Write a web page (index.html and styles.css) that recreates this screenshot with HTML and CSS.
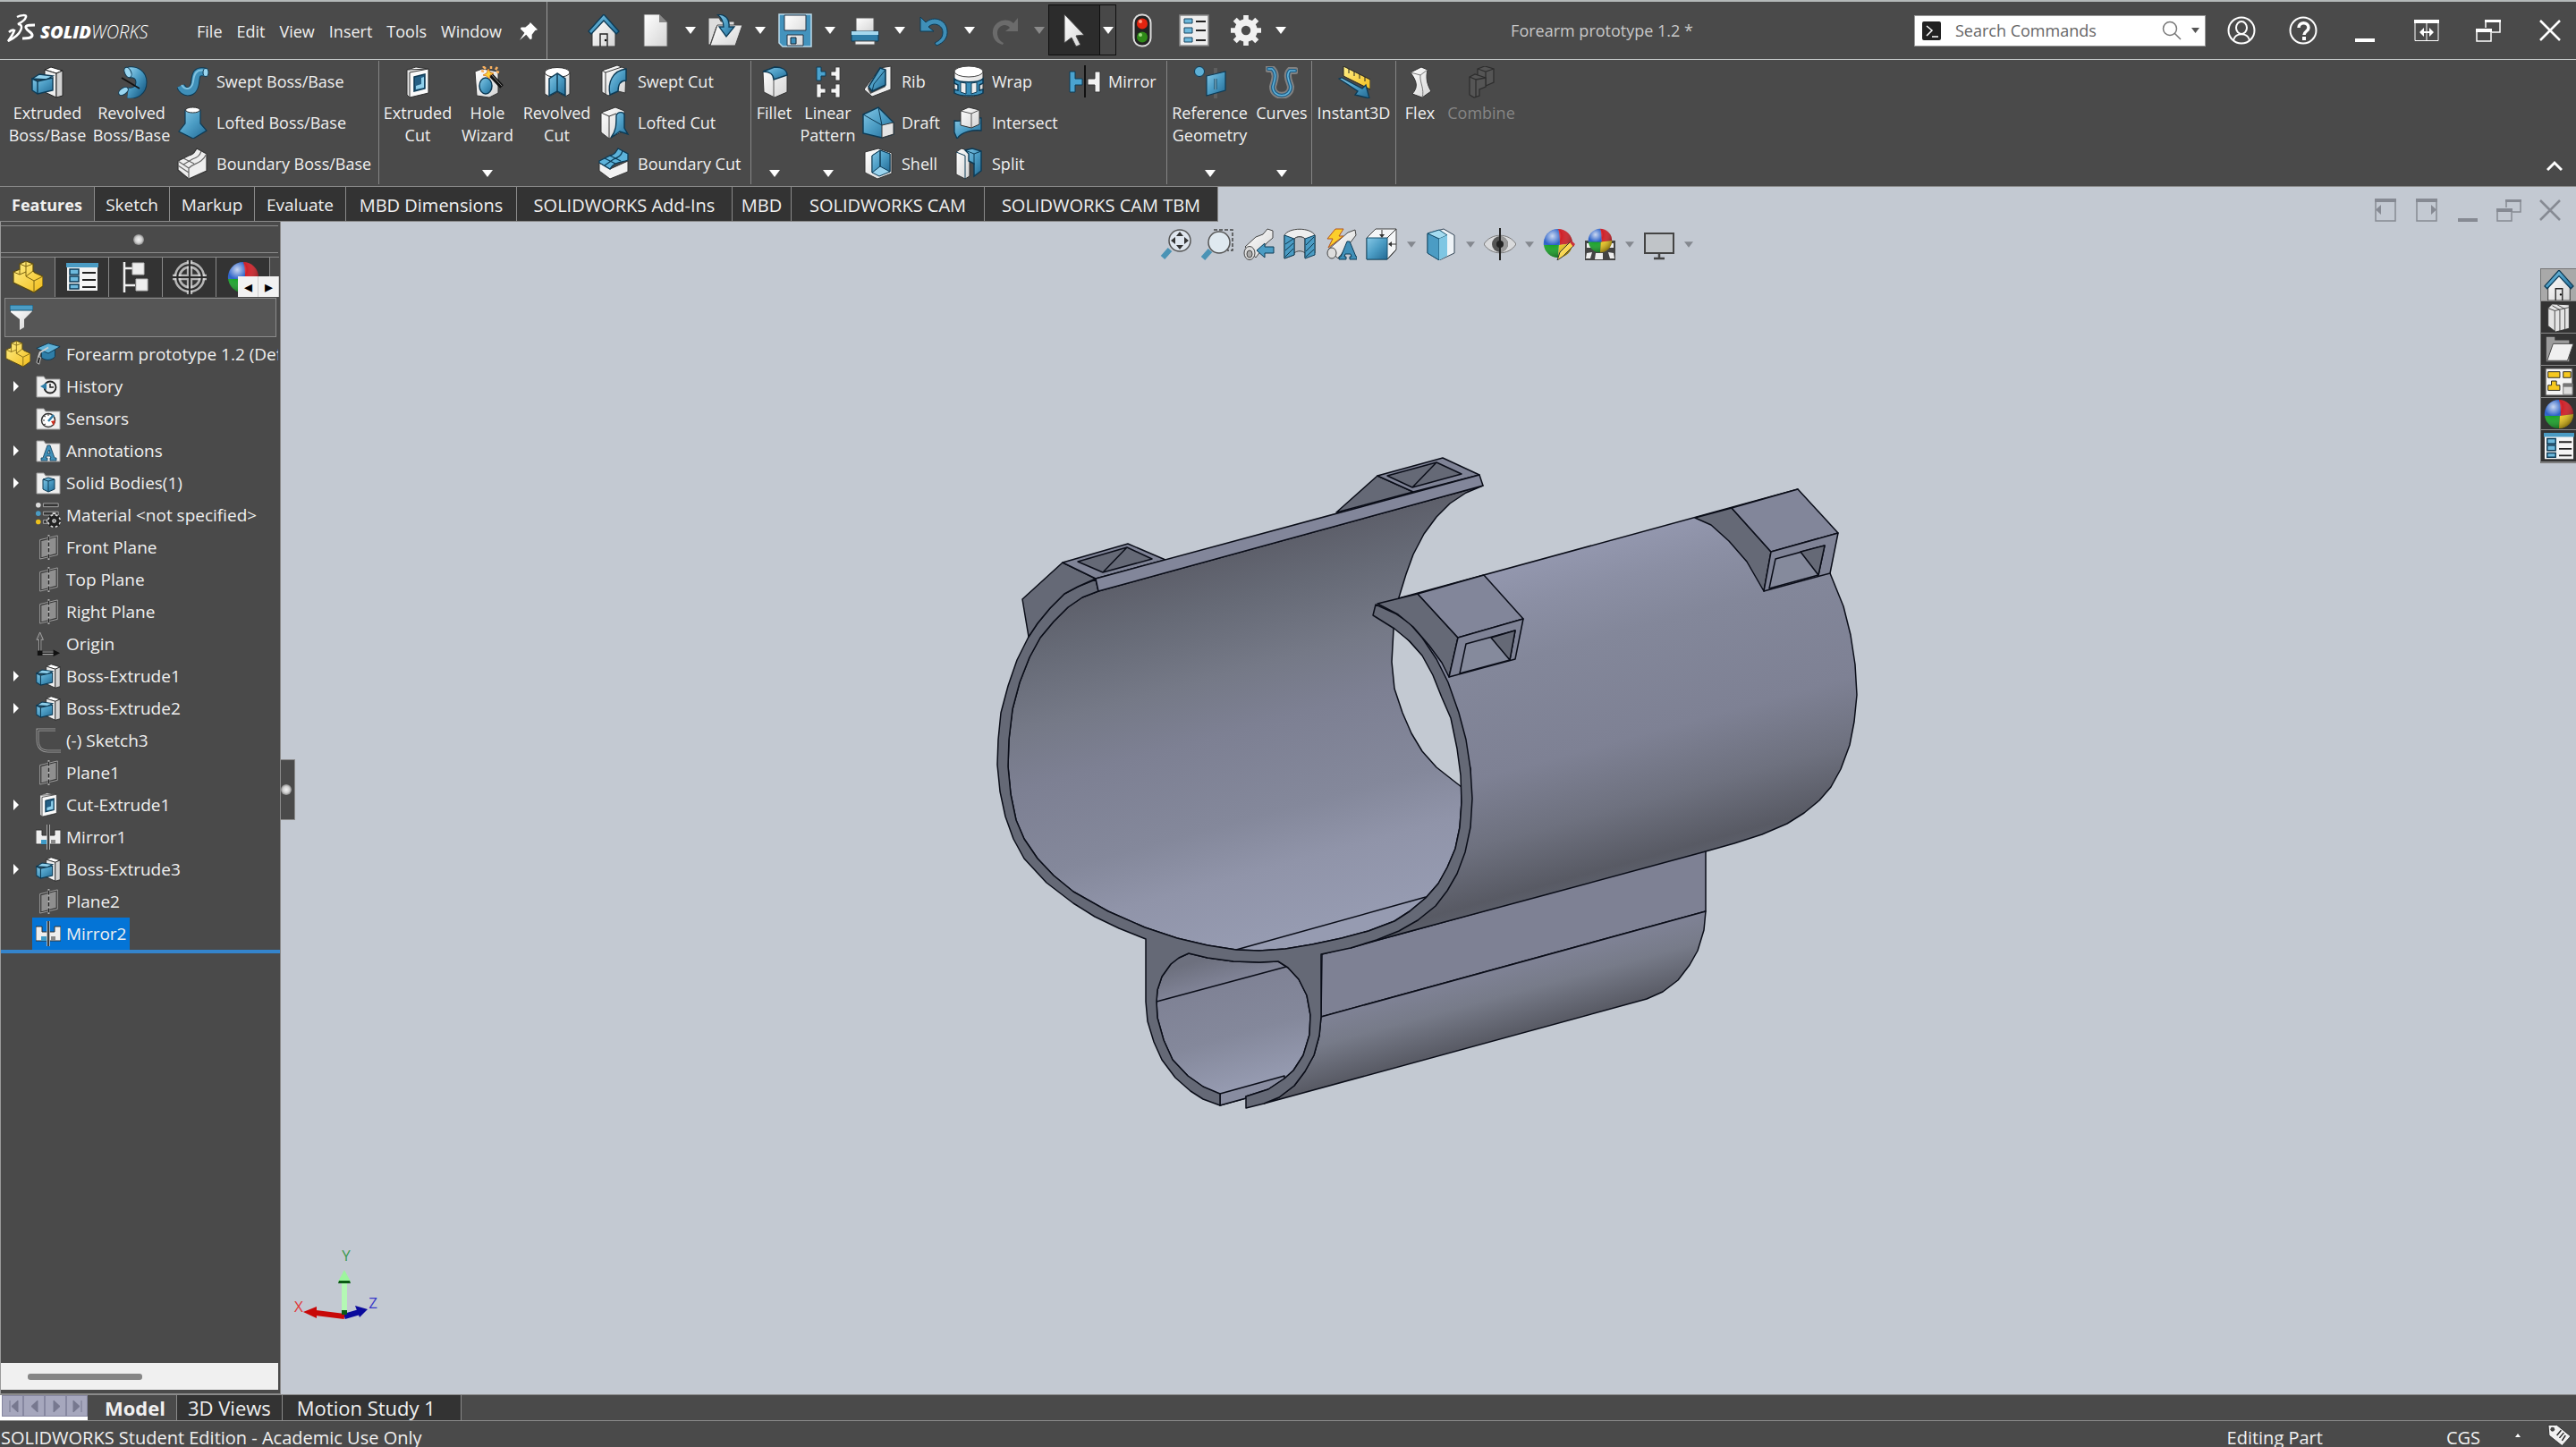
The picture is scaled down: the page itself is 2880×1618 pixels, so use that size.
FILE: index.html
```html
<!DOCTYPE html>
<html lang="en">
<head>
<meta charset="utf-8">
<title>Forearm prototype 1.2 - SOLIDWORKS</title>
<link rel="stylesheet" href="styles.css">
</head>
<body>
<svg class="defs" width="0" height="0" aria-hidden="true">
<defs>
<linearGradient id="b" x1="0" y1="0" x2="1" y2="1"><stop offset="0" stop-color="#86c8e6"/><stop offset=".5" stop-color="#4b9cc4"/><stop offset="1" stop-color="#236a94"/></linearGradient>
<linearGradient id="w" x1="0" y1="0" x2="1" y2="1"><stop offset="0" stop-color="#ffffff"/><stop offset="1" stop-color="#d4d4d4"/></linearGradient>
<linearGradient id="y" x1="0" y1="0" x2="1" y2="1"><stop offset="0" stop-color="#fff08a"/><stop offset="1" stop-color="#f2bd1c"/></linearGradient>
<radialGradient id="ball" cx=".3" cy=".25" r=".8"><stop offset="0" stop-color="#fff" stop-opacity=".75"/><stop offset=".4" stop-color="#fff" stop-opacity="0"/><stop offset="1" stop-color="#000" stop-opacity=".4"/></radialGradient>
<radialGradient id="dot"><stop offset="0" stop-color="#f4f4f4"/><stop offset=".6" stop-color="#d0d0d0"/><stop offset="1" stop-color="#8a8a8a"/></radialGradient>

<symbol id="i-down" viewBox="0 0 12 8"><path d="M0 0h12L6 8z"/></symbol>
<symbol id="i-extrude" viewBox="0 0 36 36"><g stroke="#222" stroke-width="1"><path fill="#fff" d="M15 4l7-3 13 4-7 3z"/><path fill="#eee" d="M15 4l13 4v27l-13-6z"/><path fill="#d2d2d2" d="M28 8l7-3v28l-7 2z"/></g><g stroke="#0c3a55" stroke-width="1.4"><path fill="#8fd0ec" d="M1 14l8-5 15 2-7 4z"/><path fill="url(#b)" d="M1 14l6 3 17-4v14L7 31l-6-4z"/><path d="M7 17v14" fill="none"/></g></symbol>
<symbol id="i-revolve" viewBox="0 0 36 36"><path d="M15 7c8-1 14 3 14 11 0 9-7 13-15 12" fill="none" stroke="#0c3a55" stroke-width="13"/><path d="M15 7c8-1 14 3 14 11 0 9-7 13-15 12" fill="none" stroke="url(#b)" stroke-width="11"/><ellipse cx="14" cy="7" rx="3.500" ry="6" transform="rotate(-25 14 7)" fill="#9ad6f0" stroke="#0c3a55"/><ellipse cx="9" cy="28" rx="6" ry="3.500" transform="rotate(-35 9 28)" fill="#9ad6f0" stroke="#0c3a55"/><path d="M7 13l20 12" stroke="#111" stroke-width="1.600"/></symbol>
<symbol id="i-sweep" viewBox="0 0 36 36"><path d="M4 23c3 8 14 10 16-3 1-9 1-15 13-12" fill="none" stroke="#0c3a55" stroke-width="10"/><path d="M4 23c3 8 14 10 16-3 1-9 1-15 13-12" fill="none" stroke="#3f8fb8" stroke-width="8"/><path d="M5 22c4 6 11 6 13-4 1-8 3-14 13-12" fill="none" stroke="#7fc2e0" stroke-width="2"/><ellipse cx="32" cy="8" rx="3" ry="4.500" fill="#9ad6f0" stroke="#0c3a55"/></symbol>
<symbol id="i-loft" viewBox="0 0 36 36"><path d="M9 4v15l-7 9 16 8 15-9-7-8V4z" fill="url(#b)" stroke="#0c3a55" stroke-width="1.200"/><ellipse cx="17.500" cy="4" rx="8" ry="3" fill="#fff" stroke="#333"/></symbol>
<symbol id="i-boundary" viewBox="0 0 36 36"><path d="M1 15l12-6c6-1 7-5 9-8l11 6v19L13 35 1 25z" fill="#eee" stroke="#333" stroke-width="1.200"/><path d="M1 15l12 8c5-6 14-4 20-16M13 23v12M7 12l12 6M1 20l12 8M7 19l10-6c5-2 8-3 10-9" fill="none" stroke="#666" stroke-width="1.200"/></symbol>
<symbol id="i-boundarycut" viewBox="0 0 36 36"><path d="M1 17l12 7 20-9v12L13 35 1 26z" fill="#f1f1f1" stroke="#333"/><path d="M1 15l12-6c6-1 7-5 9-8l11 6v7c-8 3-16 2-20 10L1 17z" fill="#5cb2da" stroke="#0c3a55" stroke-width="1.300"/><path d="M7 12l12 6M7 20l10-7c5-2 8-3 10-9M13 9l12 6" fill="none" stroke="#0c3a55" stroke-width="1.300"/></symbol>
<symbol id="i-cut" viewBox="0 0 36 36"><g stroke="#333"><path fill="#fff" d="M6 4l10-3 14 2-9 3z"/><path fill="#e9e9e9" d="M6 4l24-1v27L9 35l-3-3z"/><path fill="#fafafa" d="M9 7l21-4v27L9 35z"/></g><path d="M14 12l12-3v16l-12 3z" fill="#245f85" stroke="#0c3a55" stroke-width="1.500"/><path d="M16 22l6-2v-7l3-1v12l-9 2z" fill="#8fd0ec"/></symbol>
<symbol id="i-hole" viewBox="0 0 36 36"><path d="M4 6l8-3 18 3v24l-10 5L6 33z" fill="url(#w)" stroke="#333"/><ellipse cx="16" cy="22" rx="7" ry="9" fill="url(#b)" stroke="#0c3a55" stroke-width="1.500"/><path d="M20 8l14 15" stroke="#111" stroke-width="5"/><path d="M22 9l12 13" stroke="#888" stroke-width="1"/><path d="M19 3l2 4 4 1-4 2-1 4-3-3-4-1 4-2z" fill="#fcd23c" stroke="#e0862a"/><path d="M13 0l3 3M22-1v4M29 1l-2 3M11 5l3 1M31 7l-3-1" stroke="#f8b060" stroke-width="2.500"/></symbol>
<symbol id="i-revcut" viewBox="0 0 36 36"><path d="M4 7v24l5 3 9-5 9 5 5-3V7z" fill="url(#w)" stroke="#333"/><ellipse cx="18" cy="7" rx="14" ry="5.500" fill="#fff" stroke="#333"/><path d="M18 8l-9 6v19l9-5 9 5V14z" fill="url(#b)" stroke="#0c3a55" stroke-width="1.500"/><path d="M18 8v20" stroke="#0c3a55" stroke-width="1.500"/></symbol>
<symbol id="i-sweepcut" viewBox="0 0 36 36"><path d="M4 6L21 0l10 4-1 27-8-2-11 5-7-4z" fill="url(#w)" stroke="#333"/><path d="M31 4v13c-7 0-9 5-9 12l-9 4c-3-14 3-27 18-29z" fill="url(#b)" stroke="#0c3a55" stroke-width="1.400"/><path d="M4 6l4 2 18-6M8 8v25" stroke="#333" fill="none"/></symbol>
<symbol id="i-loftcut" viewBox="0 0 36 36"><path d="M3 7l16-6 10 4v22l-17 9-9-7z" fill="url(#w)" stroke="#333"/><path d="M20 10c2-5 9-4 9 0v14l4 7-9-3-10 7c6-8 6-14 6-25z" fill="url(#b)" stroke="#0c3a55" stroke-width="1.400"/><path d="M3 7l9 4v24M12 11l8-3" fill="none" stroke="#333"/></symbol>
<symbol id="i-fillet" viewBox="0 0 36 36"><path d="M5 6L18 1c8 0 14 3 14 9v19l-14 6-12-6z" fill="url(#w)" stroke="#333"/><path d="M5 6L18 1c8 0 14 3 14 9l-15 5C17 9 12 6 5 6z" fill="url(#b)" stroke="#0c3a55" stroke-width="1.400"/><path d="M17 15v20" stroke="#555"/></symbol>
<symbol id="i-pattern" viewBox="0 0 36 36"><path d="M5 1h5v5h5v5h-5v5H5z" fill="#4ba3cf" stroke="#0c3a55"/><path d="M31 1h-5v5h-5v5h5v5h5zM5 20h5v5h5v5h-5v5H5zM31 20h-5v5h-5v5h5v5h5z" fill="#f4f4f4" stroke="#333" stroke-width=".8"/></symbol>
<symbol id="i-rib" viewBox="0 0 36 36"><path d="M2 27L20 3l12-2v26L11 35z" fill="#eee" stroke="#333"/><path d="M6 26L23 4l3 20-17 8z" fill="#4a4a4a"/><path d="M7 24L20 3l6 2v17l-15 7z" fill="url(#b)" stroke="#0c3a55" stroke-width="1.600"/><path d="M11 29l2-8L26 5" fill="none" stroke="#0c3a55"/></symbol>
<symbol id="i-draft" viewBox="0 0 36 36"><path d="M1 9L18 1l17 17v13l-13 4L1 30z" fill="url(#b)" stroke="#0c3a55" stroke-width="1.400"/><path d="M22 21l13-3v13l-13 4z" fill="#e4e4e4" stroke="#333"/><path d="M1 9l21 12L18 1" fill="none" stroke="#0c3a55"/></symbol>
<symbol id="i-shell" viewBox="0 0 36 36"><path d="M3 5l15-4 15 5v23L17 35 3 28z" fill="url(#w)" stroke="#333"/><path d="M11 9l9-6 11 4v20l-12 5-8-4z" fill="#9ad4ef" stroke="#0c3a55"/><path d="M11 9l9-6v18l-9 7zM20 3l11 4v20l-11-6z" fill="url(#b)" stroke="#0c3a55"/></symbol>
<symbol id="i-wrap" viewBox="0 0 36 36"><path d="M2 7v22c3 8 29 8 32 0V7z" fill="url(#w)" stroke="#333"/><ellipse cx="18" cy="7" rx="16" ry="6" fill="#fff" stroke="#444"/><path d="M2 15c5 5 27 5 32 0v5l-4 2v6l4-1v4c-6 4-26 4-32 0v-4l4 1v-6l-4-2z" fill="#3c8fba" stroke="#0c3a55" stroke-width="1.500"/><path d="M9 19l6 1v12l-6-2zM21 20l6-1v11l-6 2z" fill="#eee" stroke="#0c3a55"/></symbol>
<symbol id="i-intersect" viewBox="0 0 36 36"><path d="M2 16c10 2 20-4 30-3v14c-9-1-22 1-27 9l-3-7z" fill="url(#b)" stroke="#0c3a55" stroke-width="1.300"/><path d="M9 5l9-4 12 3v16l-9 4-12-3z" fill="url(#w)" stroke="#333"/><path d="M9 5l12 3 9-4M21 8v16" fill="none" stroke="#555"/></symbol>
<symbol id="i-split" viewBox="0 0 36 36"><path d="M4 5l6-4 9 3v28l-5 3-10-5z" fill="url(#w)" stroke="#333"/><path d="M14 3l8-2 10 3v22l-8 6V18l-6-3V7z" fill="url(#b)" stroke="#0c3a55" stroke-width="1.400"/><path d="M14 3l10 4v12M24 7l8-3M4 5l10 4v26" fill="none" stroke="#0c3a55"/></symbol>
<symbol id="i-mirror" viewBox="0 0 36 36"><path d="M1 7h6v8h8v7H7v8H1z" fill="#4ba3cf" stroke="#0c3a55"/><path d="M35 7h-6v8h-8v7h8v8h6z" fill="#f1f1f1" stroke="#333"/><path d="M18 0v36" stroke="#111" stroke-width="2"/></symbol>
<symbol id="i-refgeo" viewBox="0 0 36 36"><path d="M24 2v34" stroke="#999" stroke-width="2.500"/><path d="M24 2v34" stroke="#222"/><path d="M14 11l21-5v21l-21 6z" fill="url(#b)" stroke="#0c3a55" stroke-width="1.200"/><path d="M24 14v12" stroke="#0c3a55" stroke-width="3"/><path d="M24 14v12" stroke="#aee0f5"/><circle cx="6" cy="6" r="5.500" fill="#5eb0d6" stroke="#0c3a55"/></symbol>
<symbol id="i-curves" viewBox="0 0 36 36"><g fill="none" stroke-linecap="round"><path d="M3 3h4c7 6 2 15 1 20 0 13 20 13 20 0-1-5-6-13-1-18h6" stroke="#a8a8a8" stroke-width="8" opacity=".6"/><path d="M3 3h4c7 6 2 15 1 20 0 13 20 13 20 0-1-5-6-13-1-18h6" stroke="#1e5f88" stroke-width="4"/><path d="M3 3h4c7 6 2 15 1 20 0 13 20 13 20 0-1-5-6-13-1-18h6" stroke="#65b4da" stroke-width="1.500"/></g></symbol>
<symbol id="i-instant" viewBox="0 0 36 36"><path d="M6 0l30 15v11L6 11z" fill="url(#y)" stroke="#222"/><path d="M12 3v5M18 6v5M24 9v5M30 12v5" stroke="#222"/><path d="M1 14l21 14-3 4 16 4-4-15-4 4L4 13z" fill="url(#b)" stroke="#0c3a55" stroke-width="1.300"/></symbol>
<symbol id="i-flex" viewBox="0 0 36 36"><path d="M7 7l12-6 7 3c-2 8-1 16 4 24l-10 7-11-4c7-8 5-14-2-24z" fill="url(#w)" stroke="#333"/><path d="M7 7l11 3 8-6M18 10c-1 8 5 16 2 25" fill="none" stroke="#777"/></symbol>
<symbol id="i-combine" viewBox="0 0 36 36"><g fill="#555" stroke="#2e2e2e" stroke-width="1.300"><path d="M14 3l8-3 10 3v15l-9 4-9-4z"/><path d="M14 3l9 3 9-3M23 6v16"/><path d="M5 12l6-3 12 4v10l-7 3v7l-6 2-5-3z"/><path d="M5 12l7 3v20M12 15l11-2" fill="none"/></g></symbol>

<symbol id="i-home" viewBox="0 0 36 36"><path d="M5 18L18 4l13 14v18H5z" fill="url(#w)" stroke="#333"/><path d="M1 19L18 0l17 19-3 3L18 7 4 22z" fill="url(#b)" stroke="#0c3a55" stroke-width="1.300"/><path d="M14 36V22h8v14" fill="none" stroke="#222" stroke-width="1.400"/><circle cx="20" cy="29" r="1.200"/></symbol>
<symbol id="i-new" viewBox="0 0 36 36"><path d="M5 0h17l9 9v27H5z" fill="url(#w)" stroke="#666"/><path d="M22 0v9h9z" fill="#888"/></symbol>
<symbol id="i-open" viewBox="0 0 40 36"><path d="M1 4h12l2 4h15v6H10L3 34H1z" fill="#ddd" stroke="#444"/><path d="M11 12h28l-8 23H3z" fill="url(#w)" stroke="#444"/><path d="M11 0c9 0 14 5 13 14h6l-9 11-8-11h5c0-6-2-10-7-14z" fill="url(#b)" stroke="#0c3a55" stroke-width="1.300"/></symbol>
<symbol id="i-save" viewBox="0 0 38 38"><path d="M1 1h36v36H5l-4-4z" fill="#4393bd" stroke="#bcdcec" stroke-width="1.500"/><path d="M7 2h24v17H7zM10 24h18v12H10z" fill="url(#w)" stroke="#234"/><path d="M14 27h6v7h-6z" fill="#3c8fba" stroke="#123"/></symbol>
<symbol id="i-print" viewBox="0 0 36 36"><path d="M8 4h20v16H8z" fill="url(#w)" stroke="#555"/><path d="M3 19h30v11H3z" fill="#2f7ea8" stroke="#0c3a55"/><path d="M3 19h30v4H3z" fill="#a4d8ee"/><path d="M7 30h22v4H7z" fill="#eee" stroke="#555"/></symbol>
<symbol id="i-undo" viewBox="0 0 36 36"><path d="M2 3v16h15l-6-5c6-6 16-2 16 6 0 6-3 9-9 12l2 3c8-3 13-9 12-17C31 6 17 1 8 9z" fill="#3f8fb8" stroke="#0c3a55"/></symbol>
<symbol id="i-redo" viewBox="0 0 36 36"><path d="M33 4v15H19l5-4c-5-6-14-2-14 6 0 5 3 9 7 11l-1 2C8 32 4 26 5 18 7 7 21 3 28 10z" fill="#6b6b6b"/></symbol>
<symbol id="i-cursor" viewBox="0 0 36 36"><path d="M7 0l22 23-9 1 5 10-5 2-5-10-8 6z" fill="url(#w)" stroke="#444"/></symbol>
<symbol id="i-traffic" viewBox="0 0 22 38"><rect x="1.500" y="1.500" width="19" height="35" rx="9" fill="#222" stroke="#ddd" stroke-width="2"/><circle cx="11" cy="11.500" r="6" fill="#e2240f"/><circle cx="11" cy="26.500" r="6" fill="#2f8a18"/><circle cx="9" cy="9" r="2" fill="#ff9a80"/><circle cx="9" cy="24" r="2" fill="#9fdc80"/></symbol>
<symbol id="i-options" viewBox="0 0 34 36"><path d="M1 1h32v34H1z" fill="#eee" stroke="#888" stroke-width="1.500"/><path d="M6 5h9v5H6zM6 15h9v6H6zM6 26h9v5H6z" fill="#6db9dc" stroke="#16425e"/><path d="M19 8h11M19 18h11M19 29h11" stroke="#222" stroke-width="2"/></symbol>
<symbol id="i-gear" viewBox="0 0 36 36"><circle cx="18" cy="18" r="9.500" fill="none" stroke="#f0f0f0" stroke-width="8"/><path d="M18 0v6M18 30v6M0 18h6M30 18h6M5 5l5 5M26 26l5 5M31 5l-5 5M10 26l-5 5" stroke="#f0f0f0" stroke-width="6"/></symbol>
<symbol id="i-pin" viewBox="0 0 24 24"><path d="M14 1l9 9-3 1-4 5v5l-2 1-5-6-8 7 6-9-5-5 1-2h5l5-4z" fill="#fff"/></symbol>

<symbol id="i-zoomfit" viewBox="0 0 36 36"><path d="M3 33l8-9" stroke="#4a93b5" stroke-width="6"/><circle cx="22" cy="14" r="12" fill="#dfe6ee" stroke="#555" stroke-width="1.500"/><path d="M22 4l4 5h-8zM22 24l4-5h-8zM12 14l5-4v8zM32 14l-5-4v8z" fill="#333"/></symbol>
<symbol id="i-zoomarea" viewBox="0 0 36 36"><path d="M14 2h21v23h-6" fill="none" stroke="#444" stroke-width="1.500" stroke-dasharray="4 2"/><path d="M2 34l8-9" stroke="#4a93b5" stroke-width="6"/><circle cx="20" cy="16" r="12" fill="#dfe9f0" stroke="#555" stroke-width="1.500"/></symbol>
<symbol id="i-prev" viewBox="0 0 36 36"><path d="M3 21L15 10l8-3 5-6 6 2v8l-7 6-12 16z" fill="url(#w)" stroke="#444"/><ellipse cx="8" cy="28" rx="6" ry="7.500" fill="#ddd" stroke="#444"/><ellipse cx="8" cy="29" rx="3" ry="4" fill="#aaa" stroke="#444"/><path d="M16 25l9-8v4h10v7H25v5z" fill="#4b9cc4" stroke="#0c3a55"/></symbol>
<symbol id="i-section" viewBox="0 0 36 36"><path d="M1 8C6-1 30-1 35 8v20l-11 5V12c-3-3-9-3-12 0v18L1 34z" fill="#eee" stroke="#444"/><path d="M12 12c3-3 9-3 12 0v16c-3-3-9-3-12 0z" fill="#b8bcc2" stroke="#444"/><path d="M1 8l11 4v18L1 34zM24 12l11-4v22l-11 4z" fill="#4b9cc4" stroke="#0c3a55"/><path d="M2 18l9-6M2 25l9-8M2 32l9-9M25 19l9-9M25 26l9-9M25 32l9-8" stroke="#12384e"/></symbol>
<symbol id="i-annot" viewBox="0 0 36 36"><path d="M4 24L26 5l8-3 1 6-20 26z" fill="url(#w)" stroke="#444"/><ellipse cx="8" cy="28" rx="5" ry="6" fill="#ddd" stroke="#444"/><path d="M12 1h9l-5 8h5L4 22l5-10H3z" fill="#fbcf2c" stroke="#b4521a"/><path d="M16 35v-3h2l7-17h3l7 17h1v3h-8v-3h2l-1-3h-6l-1 3h2v3z" fill="#3f8fb8" stroke="#0c3a55"/></symbol>
<symbol id="i-orient" viewBox="0 0 36 36"><path d="M1 11L11 1h23v23L24 35H1z" fill="#f4f6f8" stroke="#444"/><path d="M1 11h23v24H1z" fill="url(#b)" stroke="#16506e"/><path d="M24 11L34 1M24 35l10-11M18 2v6M34 18h-6" stroke="#333"/><path d="M18 11l-3-4h6zM25 18l4-3v6z" fill="#333"/></symbol>
<symbol id="i-display" viewBox="0 0 36 36"><path d="M3 6l18-5 12 7v20l-17 8-13-8z" fill="#eef3f7" stroke="#345"/><path d="M3 6l13 6v24L3 28z" fill="#4b9cc4" stroke="#16506e"/><path d="M3 6l13-4 9 6-9 4z" fill="#a5dcf0" stroke="#16506e"/><path d="M16 12l9-4v23l-9 5z" fill="#7fc6e3"/></symbol>
<symbol id="i-eye" viewBox="0 0 36 36"><path d="M0 18C8 5 28 5 36 18 28 31 8 31 0 18z" fill="#d9dadc" stroke="#777"/><circle cx="18" cy="18" r="9" fill="#555"/><path d="M18 9a9 9 0 0 1 0 18z" fill="#999"/><circle cx="18" cy="18" r="4" fill="#222"/><path d="M18 0v36" stroke="#222" stroke-width="2"/></symbol>
<symbol id="i-ball" viewBox="0 0 36 36"><path d="M18 18V1A17 17 0 0 0 1 20z" fill="#2c62c8"/><path d="M18 1a17 17 0 0 1 17 17l-15 2z" fill="#d02028"/><path d="M1 19l18 1-1 15A17 17 0 0 1 1 19z" fill="#18a328"/><path d="M19 20l16-2a17 17 0 0 1-17 17z" fill="#ecc81c"/><path d="M18 1c2 6 2 13 2 19H1V18h17z" fill="#2c62c8"/><circle cx="18" cy="18" r="17" fill="url(#ball)"/></symbol>
<symbol id="i-appear" viewBox="0 0 36 36"><use href="#i-ball" width="34" height="34"/><path d="M16 36l3-9 12-12 4 4-13 13z" fill="url(#y)" stroke="#333"/><path d="M30 16l2-2 4 4-2 3z" fill="#c8323a"/></symbol>
<symbol id="i-scene" viewBox="0 0 36 36"><path d="M1 14h34v22H1z" fill="#444"/><path d="M3 17h5v5H3zM28 17h5v5h-5zM3 28l6-1-2 7H2zM13 28h8v7h-9zM27 27l6 1 1 6h-5z" fill="#eee"/><use href="#i-ball" x="4" width="28" height="28"/></symbol>
<symbol id="i-monitor" viewBox="0 0 36 36"><path d="M2 6h32v22H2z" fill="#c0c4c8" stroke="#444" stroke-width="2"/><path d="M18 28v5M12 34h12" stroke="#444" stroke-width="2.500"/></symbol>

<symbol id="i-user" viewBox="0 0 36 36"><g fill="none" stroke="#fff" stroke-width="2"><circle cx="18" cy="18" r="14.500"/><ellipse cx="18" cy="15" rx="6" ry="7"/><path d="M9 29c2-9 16-9 18 0"/></g></symbol>
<symbol id="i-help" viewBox="0 0 36 36"><circle cx="18" cy="18" r="14.500" fill="none" stroke="#fff" stroke-width="2"/><path d="M13 15c0-7 11-7 11 0 0 4-5 4-5 8" fill="none" stroke="#fff" stroke-width="3.500"/><path d="M17 25h4v4h-4z" fill="#fff"/></symbol>
<symbol id="i-min" viewBox="0 0 36 36"><path d="M7 27h22v4H7z" fill="currentColor"/></symbol>
<symbol id="i-span" viewBox="0 0 36 36"><path d="M5 6.500h26v23H5z" fill="none" stroke="#fff"/><path d="M4 6h28v4H4zM17.500 8h1v22h-1z" fill="#fff"/><path d="M10 20l5-5v4h6v-4l5 5-5 5v-4h-6v4z" fill="#fff"/></symbol>
<symbol id="i-restore" viewBox="0 0 36 36"><g fill="none" stroke="currentColor" stroke-width="1.500"><path d="M15 15V7h16v13h-9"/><path d="M5 17h16v13H5z"/></g><path d="M14 6h18v3H14zM4 16h18v4H4z" fill="currentColor"/></symbol>
<symbol id="i-close" viewBox="0 0 36 36"><path d="M7 7l22 22M29 7L7 29" stroke="currentColor" stroke-width="2.500"/></symbol>
<symbol id="i-dockl" viewBox="0 0 36 36"><path d="M7 6h22v24H7z" fill="none" stroke="currentColor" stroke-width="1.500"/><path d="M6 5h24v4H6zM13 12v11l-6-5.500z" fill="currentColor"/></symbol>
<symbol id="i-dockr" viewBox="0 0 36 36"><path d="M7 6h22v24H7z" fill="none" stroke="currentColor" stroke-width="1.500"/><path d="M6 5h24v4H6zM23 12v11l6-5.500z" fill="currentColor"/></symbol>

<symbol id="i-part" viewBox="0 0 34 36"><path d="M1 12l7-3V3l7-3 8 3v8l2 2 9 4v11l-10 7L1 24z" fill="url(#y)" stroke="#5a4a10" stroke-width="1.200"/><path d="M1 12l7 3 7-3M8 9v6M15 6V0M8 3l7 3 8-3M15 6v11l9 5 10-5M24 22v13M23 11l-8 6" fill="none" stroke="#7a6210"/></symbol>
<symbol id="i-props" viewBox="0 0 36 32"><path d="M1 1h34v30H1z" fill="#f4f4f4"/><path d="M0 0h36v5H0z" fill="#4b9cc4"/><path d="M4 7h10v6H4zM4 15h10v6H4zM4 24h10v5H4z" fill="#6db9dc" stroke="#0c3a55" stroke-width="1.500"/><path d="M18 11h15M18 19h15M18 27h15" stroke="#222" stroke-width="2"/></symbol>
<symbol id="i-config" viewBox="0 0 30 36"><path d="M2 1v34M2 8h10M2 27h12" stroke="#f0f0f0" stroke-width="2.500" fill="none"/><path d="M11 2h13v13H11zM15 20h13v13H15z" fill="#eee" stroke="#bbb"/></symbol>
<symbol id="i-target" viewBox="0 0 36 36"><circle cx="18" cy="18" r="13" fill="none" stroke="#e0e0e0" stroke-width="7" opacity=".75"/><path d="M18 0v36M0 18h36" stroke="#e0e0e0" stroke-width="6" opacity=".75"/><circle cx="18" cy="18" r="13" fill="none" stroke="#2a2a2a" stroke-width="2"/><path d="M18 0v36M0 18h36" stroke="#2a2a2a" stroke-width="2"/></symbol>
<symbol id="i-filter" viewBox="0 0 26 28"><path d="M1 5h24v2l-9 9v9l-5 3V16L1 8z" fill="url(#w)"/><path d="M0 0h26v6H0z" fill="#4b9cc4" stroke="#16506e"/></symbol>
<symbol id="i-hat" viewBox="0 0 30 28"><path d="M7 10v8c4 4 12 4 16-1V9z" fill="#2f7ea8" stroke="#0c3a55"/><path d="M1 7l14-6 14 4-14 8z" fill="#5eb0d6" stroke="#0c3a55"/><path d="M15 6L5 12l-2 6" stroke="#ccc" stroke-width="2" fill="none"/><path d="M3 17l3 1-2 8-3-2z" fill="#222" stroke="#ccc"/></symbol>
<symbol id="i-folder" viewBox="0 0 28 26"><path d="M1 2h8l2 3h16v20H1z" fill="#eee" stroke="#999"/></symbol>
<symbol id="i-history" viewBox="0 0 28 26"><use href="#i-folder"/><circle cx="16" cy="14" r="6.500" fill="none" stroke="#222" stroke-width="1.800"/><path d="M16 10v4h4" stroke="#222" stroke-width="1.500" fill="none"/><path d="M12 9v8l-7-4z" fill="#2f7ea8"/></symbol>
<symbol id="i-sensor" viewBox="0 0 28 26"><use href="#i-folder"/><circle cx="14" cy="15" r="7.500" fill="#fff" stroke="#333" stroke-width="1.500"/><path d="M14 16l6-7" stroke="#2f7ea8" stroke-width="2.500"/><path d="M17 16l5-1-2 6z" fill="#d03020"/><path d="M8 15h2M9 10l2 1M14 8v2M9 20l2-1" stroke="#333"/></symbol>
<symbol id="i-anno" viewBox="0 0 28 26"><use href="#i-folder"/><path d="M6 24v-3h2l5-14h3l5 14h2v3h-7v-3h1l-1-2h-4l-1 2h2v3zM13 16h3l-1-4z" fill="#3f8fb8" stroke="#0c3a55" stroke-width=".8"/></symbol>
<symbol id="i-bodies" viewBox="0 0 28 26"><use href="#i-folder"/><path d="M8 9l6-2 7 2v11l-7 3-6-3z" fill="url(#b)" stroke="#0c3a55"/><path d="M8 9l6 2 7-2M14 11v12" fill="none" stroke="#0c3a55"/></symbol>
<symbol id="i-material" viewBox="0 0 30 30"><circle cx="3" cy="3" r="3" fill="#ddd"/><circle cx="3" cy="13" r="3" fill="#4b9cc4"/><circle cx="3" cy="23" r="3" fill="#ecc01c"/><path d="M9 1h18v4H9zM9 11h18v4H9zM9 21h8v4H9z" fill="#333" stroke="#aaa"/><circle cx="22" cy="22" r="4.500" fill="none" stroke="#ddd" stroke-width="7"/><path d="M22 12v4M22 28v2M13 22h4M27 22h3" stroke="#ddd" stroke-width="4"/><circle cx="22" cy="22" r="4.500" fill="none" stroke="#222" stroke-width="4"/><path d="M22 14v3M22 27v3M14 22h3M27 22h3M16 16l3 3M25 25l3 3M28 16l-3 3M19 25l-3 3" stroke="#222" stroke-width="2.500"/></symbol>
<symbol id="i-plane" viewBox="0 0 28 30"><path d="M5 7l19-5v21L5 28z" fill="#8f8f8f" stroke="#333" stroke-width="1.500"/><path d="M4 6l21-5v23L4 29z" fill="none" stroke="#a5a5a5"/><path d="M14.500 0v30" stroke="#b5b5b5" stroke-width="2"/><path d="M14.500 2v26" stroke="#222" stroke-width="1.500" stroke-dasharray="5 2"/></symbol>
<symbol id="i-origin" viewBox="0 0 28 30"><path d="M4 26V9M4 26h18" stroke="#aaa" stroke-width="3.500"/><path d="M4 1l4 9H0z" fill="#555" stroke="#aaa"/><path d="M4 26V9M4 26h18" stroke="#222" stroke-width="1.500"/><path d="M1 23h6v6H1zM20 22l8 4-8 4z" fill="#111"/></symbol>
<symbol id="i-sketch" viewBox="0 0 28 28"><path d="M22 2H2v11c0 9 5 13 12 13h14" fill="none" stroke="#999" stroke-width="3"/><path d="M22 2H2v11c0 9 5 13 12 13h14" fill="none" stroke="#333"/></symbol>
<symbol id="i-mirrorf" viewBox="0 0 28 28"><path d="M0 6h7v6h6v10H0zM28 6h-7v6h-6v10h13z" fill="#eee" stroke="#333"/><path d="M6 17h6v5H6z" fill="#3f9bc8"/><path d="M17 17h5v5h-5z" fill="#888"/><path d="M14 0v28" stroke="#ccc" stroke-width="3.500"/><path d="M14 0v28" stroke="#111" stroke-width="1.500"/></symbol>
<symbol id="i-books" viewBox="0 0 36 36"><path d="M5 7l5-5 20 1v28l-16 4-9-7z" fill="#e4e4e4" stroke="#333"/><path d="M13 10v25M19 9v25M25 8v24M5 7l8 3 17-4M10 4l9 5M16 3l9 5" stroke="#444" fill="none"/></symbol>
<symbol id="i-folder2" viewBox="0 0 36 36"><path d="M3 3h10v4h17v25H3z" fill="#9c9c9c"/><path d="M11 11h24l-7 20H4z" fill="#f0f0f0" stroke="#444"/></symbol>
<symbol id="i-views" viewBox="0 0 36 36"><path d="M2 2h32v32H2z" fill="#f4f4f4" stroke="#444" stroke-width="1.500"/><path d="M5 6h14v7H5zM23 6h9v7h-9zM5 28v-6h4v-5h6v5h4v6z" fill="#f6c81e" stroke="#222"/><path d="M23 20h11v13H23z" fill="#ddd" stroke="#777"/><path d="M23 20h11v4H23z" fill="#777"/></symbol>
<symbol id="i-tag" viewBox="0 0 28 26"><path d="M1 1h10l16 13-10 11L2 13z" fill="#f2f2f2" stroke="#333"/><circle cx="6" cy="6" r="2.500" fill="#444"/><path d="M11 13l5-6M14 16l5-6M17 19l4-6" stroke="#222" stroke-width="1.500"/></symbol>
</defs>
</svg>

<header class="titlebar">
  <div class="brand">
    <svg width="32" height="32" viewBox="0 0 32 32" fill="none" stroke="#fff" aria-hidden="true"><path d="M11 4c4-2 11-3 10 0-1 4-5 6-9 8 4 0 5 3 3 7-2 5-8 9-14 12 3-4 6-9 7-12-2-1-4 0-6 2" stroke-width="2.500"/><path d="M31 13c-6 0-11 0-10 3 1 4 8 5 7 9-1 3-6 3-11 3" stroke-width="3"/></svg>
    <span class="wordmark"><b>SOLID</b>WORKS</span>
  </div>
  <nav class="menu">
    <button>File</button><button>Edit</button><button>View</button><button>Insert</button><button>Tools</button><button>Window</button>
    <button class="pin" aria-label="Pin menu"><svg width="22" height="22"><use href="#i-pin"/></svg></button>
  </nav>
  <div class="quick">
    <button class="q" aria-label="Home"><svg width="36" height="36"><use href="#i-home"/></svg></button>
    <button class="q" aria-label="New"><svg width="36" height="36"><use href="#i-new"/></svg></button><button class="dd" aria-label="New options"><svg width="12" height="8"><use href="#i-down"/></svg></button>
    <button class="q" aria-label="Open"><svg width="40" height="36"><use href="#i-open"/></svg></button><button class="dd" aria-label="Open options"><svg width="12" height="8"><use href="#i-down"/></svg></button>
    <button class="q" aria-label="Save"><svg width="38" height="38"><use href="#i-save"/></svg></button><button class="dd" aria-label="Save options"><svg width="12" height="8"><use href="#i-down"/></svg></button>
    <button class="q" aria-label="Print"><svg width="36" height="36"><use href="#i-print"/></svg></button><button class="dd" aria-label="Print options"><svg width="12" height="8"><use href="#i-down"/></svg></button>
    <button class="q" aria-label="Undo"><svg width="36" height="36"><use href="#i-undo"/></svg></button><button class="dd" aria-label="Undo options"><svg width="12" height="8"><use href="#i-down"/></svg></button>
    <button class="q" aria-label="Redo"><svg width="36" height="36"><use href="#i-redo"/></svg></button><button class="dd off" aria-label="Redo options"><svg width="12" height="8"><use href="#i-down"/></svg></button>
    <button class="q active" aria-label="Select"><svg width="36" height="36"><use href="#i-cursor"/></svg></button><button class="dd active" aria-label="Select options"><svg width="12" height="8"><use href="#i-down"/></svg></button>
    <button class="q" aria-label="Rebuild"><svg width="22" height="38"><use href="#i-traffic"/></svg></button>
    <button class="q" aria-label="File properties"><svg width="34" height="36"><use href="#i-options"/></svg></button>
    <button class="q" aria-label="Options"><svg width="34" height="34"><use href="#i-gear"/></svg></button><button class="dd" aria-label="More options"><svg width="12" height="8"><use href="#i-down"/></svg></button>
  </div>
  <h1 class="doc-title">Forearm prototype 1.2 *</h1>
  <div class="search">
    <svg width="21" height="21" viewBox="0 0 21 21" aria-hidden="true"><rect width="21" height="21" rx="2" fill="#222"/><path d="M5 5l6 5-6 6M11 17h7" fill="none" stroke="#fff" stroke-width="1.500"/></svg>
    <input type="text" placeholder="Search Commands" aria-label="Search Commands">
    <svg width="22" height="22" viewBox="0 0 22 22" fill="none" stroke="#777" stroke-width="1.500" aria-hidden="true"><circle cx="9" cy="9" r="7.500"/><path d="M14 14l7 7"/></svg>
    <svg class="search-dd" width="9" height="6"><use href="#i-down"/></svg>
  </div>
  <div class="win">
    <button aria-label="Account"><svg width="36" height="36"><use href="#i-user"/></svg></button>
    <button aria-label="Help"><svg width="36" height="36"><use href="#i-help"/></svg></button>
    <button aria-label="Minimize"><svg width="36" height="36"><use href="#i-min"/></svg></button>
    <button aria-label="Span displays"><svg width="36" height="36"><use href="#i-span"/></svg></button>
    <button aria-label="Restore"><svg width="36" height="36"><use href="#i-restore"/></svg></button>
    <button aria-label="Close"><svg width="36" height="36"><use href="#i-close"/></svg></button>
  </div>
</header>

<section class="ribbon" aria-label="Features toolbar">
  <div class="group g1">
    <button class="big"><svg><use href="#i-extrude"/></svg><span>Extruded<br>Boss/Base</span></button>
    <button class="big"><svg><use href="#i-revolve"/></svg><span>Revolved<br>Boss/Base</span></button>
    <div class="stack">
      <button><svg><use href="#i-sweep"/></svg>Swept Boss/Base</button>
      <button><svg><use href="#i-loft"/></svg>Lofted Boss/Base</button>
      <button><svg><use href="#i-boundary"/></svg>Boundary Boss/Base</button>
    </div>
  </div>
  <div class="group g2">
    <button class="big"><svg><use href="#i-cut"/></svg><span>Extruded<br>Cut</span></button>
    <button class="big"><svg><use href="#i-hole"/></svg><span>Hole<br>Wizard</span><svg class="more"><use href="#i-down"/></svg></button>
    <button class="big"><svg><use href="#i-revcut"/></svg><span>Revolved<br>Cut</span></button>
    <div class="stack">
      <button><svg><use href="#i-sweepcut"/></svg>Swept Cut</button>
      <button><svg><use href="#i-loftcut"/></svg>Lofted Cut</button>
      <button><svg><use href="#i-boundarycut"/></svg>Boundary Cut</button>
    </div>
  </div>
  <div class="group g3">
    <button class="big"><svg><use href="#i-fillet"/></svg><span>Fillet</span><svg class="more"><use href="#i-down"/></svg></button>
    <button class="big"><svg><use href="#i-pattern"/></svg><span>Linear<br>Pattern</span><svg class="more"><use href="#i-down"/></svg></button>
    <div class="stack">
      <button><svg><use href="#i-rib"/></svg>Rib</button>
      <button><svg><use href="#i-draft"/></svg>Draft</button>
      <button><svg><use href="#i-shell"/></svg>Shell</button>
    </div>
    <div class="stack">
      <button><svg><use href="#i-wrap"/></svg>Wrap</button>
      <button><svg><use href="#i-intersect"/></svg>Intersect</button>
      <button><svg><use href="#i-split"/></svg>Split</button>
    </div>
    <div class="stack">
      <button><svg><use href="#i-mirror"/></svg>Mirror</button>
    </div>
  </div>
  <div class="group g4">
    <button class="big"><svg><use href="#i-refgeo"/></svg><span>Reference<br>Geometry</span><svg class="more"><use href="#i-down"/></svg></button>
    <button class="big"><svg><use href="#i-curves"/></svg><span>Curves</span><svg class="more"><use href="#i-down"/></svg></button>
  </div>
  <div class="group g5">
    <button class="big"><svg><use href="#i-instant"/></svg><span>Instant3D</span></button>
  </div>
  <div class="group g6">
    <button class="big"><svg><use href="#i-flex"/></svg><span>Flex</span></button>
    <button class="big" disabled><svg><use href="#i-combine"/></svg><span>Combine</span></button>
  </div>
  <button class="collapse" aria-label="Collapse toolbar"><svg width="18" height="12" viewBox="0 0 18 12"><path d="M1 11l8-8 8 8" fill="none" stroke="#fff" stroke-width="3"/></svg></button>
</section>

<div class="tabrow">
  <div class="tabs" role="tablist">
    <button role="tab" aria-selected="true">Features</button><button role="tab">Sketch</button><button role="tab">Markup</button><button role="tab">Evaluate</button><button role="tab">MBD Dimensions</button><button role="tab">SOLIDWORKS Add-Ins</button><button role="tab">MBD</button><button role="tab">SOLIDWORKS CAM</button><button role="tab">SOLIDWORKS CAM TBM</button>
  </div>
  <div class="docwin">
    <button aria-label="Dock left"><svg width="36" height="36"><use href="#i-dockl"/></svg></button>
    <button aria-label="Dock right"><svg width="36" height="36"><use href="#i-dockr"/></svg></button>
    <button aria-label="Minimize document"><svg width="36" height="36"><use href="#i-min"/></svg></button>
    <button aria-label="Restore document"><svg width="36" height="36"><use href="#i-restore"/></svg></button>
    <button aria-label="Close document"><svg width="36" height="36"><use href="#i-close"/></svg></button>
  </div>
</div>

<main class="work">
  <aside class="panel">
    <div class="grip"><svg width="12" height="12"><circle cx="6" cy="6" r="6" fill="url(#dot)"/></svg></div>
    <div class="ptabs">
      <button class="on" aria-label="Feature tree"><svg width="34" height="36"><use href="#i-part"/></svg></button>
      <button aria-label="Properties"><svg width="36" height="32"><use href="#i-props"/></svg></button>
      <button aria-label="Configurations"><svg width="30" height="36"><use href="#i-config"/></svg></button>
      <button aria-label="Dimensions"><svg width="38" height="38"><use href="#i-target"/></svg></button>
      <button aria-label="Display"><svg width="36" height="36"><use href="#i-ball"/></svg></button>
      <span class="pnav"><button aria-label="Previous tabs">◂</button><button aria-label="Next tabs">▸</button></span>
    </div>
    <div class="filter"><svg width="26" height="28" aria-hidden="true"><use href="#i-filter"/></svg><input type="text" aria-label="Filter tree"></div>
    <ul class="tree">
      <li class="root"><svg width="28" height="30"><use href="#i-part"/></svg><span><svg><use href="#i-hat"/></svg>Forearm prototype 1.2 (Default)</span></li>
      <li class="has"><i></i><span><svg><use href="#i-history"/></svg>History</span></li>
      <li><i></i><span><svg><use href="#i-sensor"/></svg>Sensors</span></li>
      <li class="has"><i></i><span><svg><use href="#i-anno"/></svg>Annotations</span></li>
      <li class="has"><i></i><span><svg><use href="#i-bodies"/></svg>Solid Bodies(1)</span></li>
      <li><i></i><span><svg><use href="#i-material"/></svg>Material &lt;not specified&gt;</span></li>
      <li><i></i><span><svg><use href="#i-plane"/></svg>Front Plane</span></li>
      <li><i></i><span><svg><use href="#i-plane"/></svg>Top Plane</span></li>
      <li><i></i><span><svg><use href="#i-plane"/></svg>Right Plane</span></li>
      <li><i></i><span><svg><use href="#i-origin"/></svg>Origin</span></li>
      <li class="has"><i></i><span><svg><use href="#i-extrude"/></svg>Boss-Extrude1</span></li>
      <li class="has"><i></i><span><svg><use href="#i-extrude"/></svg>Boss-Extrude2</span></li>
      <li><i></i><span><svg><use href="#i-sketch"/></svg>(-) Sketch3</span></li>
      <li><i></i><span><svg><use href="#i-plane"/></svg>Plane1</span></li>
      <li class="has"><i></i><span><svg><use href="#i-cut"/></svg>Cut-Extrude1</span></li>
      <li><i></i><span><svg><use href="#i-mirrorf"/></svg>Mirror1</span></li>
      <li class="has"><i></i><span><svg><use href="#i-extrude"/></svg>Boss-Extrude3</span></li>
      <li><i></i><span><svg><use href="#i-plane"/></svg>Plane2</span></li>
      <li class="sel"><i></i><span><svg><use href="#i-mirrorf"/></svg>Mirror2</span></li>
    </ul>
    <div class="hscroll"><div class="thumb"></div></div>
    <div class="panel-foot"></div>
  </aside>

  <section class="viewport" aria-label="Graphics area">
    <button class="flyout" aria-label="Collapse panel"><svg width="12" height="12"><circle cx="6" cy="6" r="6" fill="url(#dot)"/></svg></button>
    <div class="hud">
      <button aria-label="Zoom to fit"><svg><use href="#i-zoomfit"/></svg></button>
      <button aria-label="Zoom to area"><svg><use href="#i-zoomarea"/></svg></button>
      <button aria-label="Previous view"><svg><use href="#i-prev"/></svg></button>
      <button aria-label="Section view"><svg><use href="#i-section"/></svg></button>
      <button aria-label="Annotation views"><svg><use href="#i-annot"/></svg></button>
      <button aria-label="View orientation"><svg><use href="#i-orient"/></svg></button><button class="dd" aria-label="Orientation list"><svg><use href="#i-down"/></svg></button>
      <button aria-label="Display style"><svg><use href="#i-display"/></svg></button><button class="dd" aria-label="Display list"><svg><use href="#i-down"/></svg></button>
      <button aria-label="Hide or show"><svg><use href="#i-eye"/></svg></button><button class="dd" aria-label="Hide list"><svg><use href="#i-down"/></svg></button>
      <button aria-label="Edit appearance"><svg><use href="#i-appear"/></svg></button>
      <button aria-label="Apply scene"><svg><use href="#i-scene"/></svg></button><button class="dd" aria-label="Scene list"><svg><use href="#i-down"/></svg></button>
      <button aria-label="View settings"><svg><use href="#i-monitor"/></svg></button><button class="dd" aria-label="Settings list"><svg><use href="#i-down"/></svg></button>
    </div>

    <svg class="model" viewBox="1090 480 1014 800" width="1014" height="800" role="img" aria-label="Forearm part">
      <defs>
        <linearGradient id="outer" gradientUnits="userSpaceOnUse" x1="1800" y1="604" x2="1896" y2="955"><stop offset="0" stop-color="#9397ae"/><stop offset=".12" stop-color="#8b8fa4"/><stop offset=".28" stop-color="#83879a"/><stop offset=".6" stop-color="#7e8194"/><stop offset=".8" stop-color="#6e717f"/><stop offset=".97" stop-color="#585a64"/><stop offset="1" stop-color="#5b5e69"/></linearGradient>
        <linearGradient id="inner" gradientUnits="userSpaceOnUse" x1="1400" y1="613" x2="1512" y2="1025"><stop offset="0" stop-color="#5d5f6a"/><stop offset=".12" stop-color="#666a76"/><stop offset=".3" stop-color="#757987"/><stop offset=".45" stop-color="#7d8093"/><stop offset=".68" stop-color="#84889b"/><stop offset=".82" stop-color="#9094a9"/><stop offset="1" stop-color="#969bb1"/></linearGradient>
        <linearGradient id="low" gradientUnits="userSpaceOnUse" x1="1700" y1="1076" x2="1720" y2="1150"><stop offset="0" stop-color="#7f8295"/><stop offset=".4" stop-color="#777b89"/><stop offset="1" stop-color="#585a64"/></linearGradient>
        <linearGradient id="tube" gradientUnits="userSpaceOnUse" x1="1355" y1="1070" x2="1395" y2="1215"><stop offset="0" stop-color="#6d707e"/><stop offset=".2" stop-color="#7f8295"/><stop offset=".6" stop-color="#84889b"/><stop offset="1" stop-color="#969bb1"/></linearGradient>
      </defs>
      <g stroke="#0a0d18" stroke-width="1.500" stroke-linejoin="round" fill="#656976">
        <path fill="#7e8194" d="M1478 1067L1560 1046L1730 999L1907 951V1019L1477 1137z"/>
        <path fill="url(#low)" d="M1477 1137L1907 1019L1905 1040L1898 1063L1889 1079L1876 1096L1859 1109L1841 1117L1413 1234L1430 1227L1447 1214L1459 1198L1469 1180L1475 1158z"/>
        <path fill="url(#tube)" d="M1293 1120L1294 1107L1299 1092L1309 1078L1318 1071L1329 1066L1350 1071L1379 1075L1408 1076L1429 1075L1440 1082L1452 1095L1461 1113L1465 1135L1464 1157L1457 1180L1446 1197L1436 1206L1418 1218L1393 1226V1228L1364 1236L1345 1215L1328 1203L1311 1185L1301 1163L1294 1138z"/>
        <path fill="none" d="M1293 1120L1438 1081"/>
        <path fill="#888ca0" d="M1364 1223L1436 1203L1436 1206L1418 1218L1393 1226V1228L1364 1236z"/>
        <path fill="url(#outer)" d="M1538 676L2010 547L2046 641L2061 678L2069 710L2074 743L2076 777L2073 807L2068 833L2058 860L2047 880L2034 895L2017 909L1998 921L1970 933L1939 943L1907 952L1730 1000L1559 1046L1510 1060L1585 1029L1643 925L1644 860L1618 763z"/>
        <path fill="url(#inner)" d="M1228 661L1210 668L1194 679L1178 695L1163 713L1151 735L1140 763L1132 793L1128 827L1127 857L1130 888L1136 917L1145 938L1160 960L1178 979L1200 997L1239 1019L1280 1037L1316 1049L1350 1057L1382 1062L1408 1063L1437 1061L1467 1056L1500 1049L1530 1041L1559 1030L1576 1019L1594 1004L1608 988L1618 970L1627 949L1632 925L1634 897V880L1606 858L1590 840L1578 820L1568 797L1559 770L1556 740L1558 704L1564 668L1572 642L1580 620L1592 597L1606 578L1621 563L1639 551L1658 543z"/>
        <path fill="none" d="M1382 1062L1594 1003"/>
        <path d="M1225 648L1205 656L1190 664L1174 680L1160 697L1150 712L1137 738L1127 767L1119 797L1116 827L1115 855L1118 885L1124 913L1133 938L1145 960L1170 987L1200 1010L1224 1025L1251 1038L1281 1050L1281 1120L1283 1142L1290 1165L1299 1185L1314 1205L1331 1220L1345 1229L1364 1236V1223L1345 1215L1328 1203L1311 1185L1301 1163L1294 1138L1293 1120L1294 1107L1299 1092L1309 1078L1318 1071L1329 1066L1350 1071L1379 1075L1408 1076L1429 1075L1440 1082L1452 1095L1461 1113L1465 1135L1464 1157L1457 1180L1446 1197L1436 1206L1418 1218L1393 1226V1239L1413 1234L1430 1227L1447 1214L1459 1198L1469 1180L1475 1158L1477 1137V1067L1510 1060L1539 1051L1564 1041L1585 1029L1605 1013L1618 996L1629 977L1638 953L1644 925L1646 893L1644 860L1639 827L1631 797L1619 763L1606 737L1590 713L1576 697L1560 686L1538 676L1535 688L1559 703L1576 717L1590 733L1602 755L1612 780L1622 803L1629 837L1633 867L1634 897L1632 925L1627 949L1618 970L1608 988L1594 1004L1576 1019L1559 1030L1530 1041L1500 1049L1467 1056L1437 1061L1408 1063L1382 1062L1350 1057L1316 1049L1280 1037L1239 1019L1200 997L1178 979L1160 960L1145 938L1136 917L1130 888L1127 857L1128 827L1132 793L1140 763L1151 735L1163 713L1178 695L1194 679L1210 668L1228 661z"/>
        <path d="M1188 629L1143 670L1150 712L1160 697L1174 680L1190 664L1205 656L1225 647z"/>
        <path fill="#7f8396" d="M1188 629L1261 608L1303 626L1225 647z"/>
        <path d="M1205 628L1260 612L1288 625L1233 640zM1260 612L1233 640"/>
        <path d="M1540 532L1494 573L1580 550z"/>
        <path fill="#7f8396" d="M1540 532L1613 512L1654 531L1580 550z"/>
        <path d="M1551 532L1606 517L1634 530L1579 545zM1606 517L1579 545"/>
        <path fill="#82869a" d="M1225 647L1654 531L1658 543L1228 661z"/>
        <path d="M1540 675L1585 664L1630 713L1620 757L1612 741L1598 722L1580 701L1563 687z"/>
        <path fill="#82869a" d="M1585 664L1659 643L1703 692L1630 713z"/>
        <path fill="#7f8396" d="M1630 713L1703 692L1694 737L1620 757z"/>
        <path fill="#858a9c" d="M1639 720L1694 705L1688 738L1632 753z"/>
        <path d="M1667 713L1694 705L1688 738z"/>
        <path d="M1895 579L1936 568L1980 617L1972 661L1953 628L1933 605L1913 587z"/>
        <path fill="#82869a" d="M1936 568L2010 547L2055 596L1980 617z"/>
        <path fill="#7f8396" d="M1980 617L2055 596L2046 641L1972 661z"/>
        <path fill="#858a9c" d="M1985 625L2040 610L2033 643L1978 658z"/>
        <path d="M2013 617L2040 610L2033 643z"/>
      </g>
    </svg>

    <svg class="triad" width="110" height="100" viewBox="324 1385 110 100" role="img" aria-label="Axes">
      <path d="M385 1472L402 1467" stroke="#0a0a9c" stroke-width="6"/><path d="M397 1460l14 4-9 9z" fill="#0a0a9c"/>
      <path d="M385 1472l-32-4" stroke="#c80808" stroke-width="6"/><path d="M339 1467l15-6v13z" fill="#c80808"/>
      <path d="M385 1435v34" stroke="#b4f8b4" stroke-width="6"/><path d="M385 1420l7 13h-14z" fill="#9df59d"/><path d="M379 1432h12l1 3h-14zM382 1465h6v5h-6z" fill="#0a5a14"/>
      <text x="387" y="1410" fill="#3c9a50">Y</text><text x="334" y="1467" fill="#e03838">X</text><text x="417" y="1463" fill="#3838c8">Z</text>
    </svg>

    <div class="taskpane">
      <button class="on" aria-label="Resources"><svg><use href="#i-home"/></svg></button>
      <button aria-label="Design library"><svg><use href="#i-books"/></svg></button>
      <button aria-label="File explorer"><svg><use href="#i-folder2"/></svg></button>
      <button aria-label="View palette"><svg><use href="#i-views"/></svg></button>
      <button aria-label="Appearances"><svg><use href="#i-ball"/></svg></button>
      <button aria-label="Custom properties"><svg><use href="#i-props"/></svg></button>
    </div>
  </section>
</main>

<div class="sheetbar">
  <div class="pager"><button aria-label="First"><svg><path d="M8 5v13M17 5v13l-7-6.500z"/></svg></button><button aria-label="Previous"><svg><path d="M15 5v13l-7-6.500z"/></svg></button><button aria-label="Next"><svg><path d="M9 5v13l7-6.500z"/></svg></button><button aria-label="Last"><svg><path d="M16 5v13M7 5v13l7-6.500z"/></svg></button></div>
  <button class="sheet on">Model</button><button class="sheet">3D Views</button><button class="sheet">Motion Study 1</button>
</div>
<footer class="status">
  <span class="edition">SOLIDWORKS Student Edition - Academic Use Only</span>
  <span class="mode">Editing Part</span><button class="units">CGS</button><svg class="up" width="6" height="4" viewBox="0 0 6 4"><path d="M0 4l3-4 3 4z" fill="#fff"/></svg><svg width="27" height="26"><use href="#i-tag"/></svg>
</footer>
</body>
</html>
```
FILE: styles.css
```css
* { box-sizing: border-box; }
html, body { height: 100%; margin: 0; }
body {
  display: grid;
  grid-template-columns: minmax(0, 1fr);
  grid-template-rows: auto auto auto minmax(0, 1fr) auto auto;
  background: #4a4a4a;
  color: #f0f0f0;
  font: 18px/25px "Open Sans", "Noto Sans", sans-serif;
  overflow: hidden;
}
button { margin: 0; padding: 0; border: 0; background: none; color: inherit; font: inherit; white-space: nowrap; }
input { border: 0; padding: 0; background: none; font: inherit; min-width: 0; outline: 0; }
svg { display: block; flex: none; }
.defs { position: absolute; }

/* Title bar */
.titlebar { display: flex; align-items: center; height: 67px; border-top: 2px solid #b4b9b9; border-bottom: 1px solid #c4c8c8; }
.brand { display: flex; align-items: center; gap: 5px; width: 212px; padding: 0 0 6px 8px; }
.wordmark { font-size: 20px; font-style: italic; font-weight: 300; padding-top: 9px; color: #fff; }
.wordmark b { font-weight: 800; }
.menu { display: flex; align-items: center; gap: 16px; align-self: stretch; padding: 2px 9px 0 8px; border-right: 1px solid #9a9a9a; }
.menu .pin { margin-left: 3px; }
.quick { display: flex; align-self: stretch; padding-left: 34px; align-items: stretch; }
.quick .q, .quick .dd { display: flex; align-items: center; justify-content: center; margin: 3px 0 4px; }
.quick .q { width: 58px; }
.dd { width: 20px; fill: #fff; }
.dd.off { fill: #8a8a8a; }
.quick .active { background: #2c2c2c; border: 1px solid #0e0e0e; }
.quick .dd.active { width: 18px; background: #484848; border-left: 0; }
.doc-title { flex: 1; margin: 0; text-align: center; font-size: 18px; font-weight: 400; color: #c8c8c8; }
.search { display: flex; align-items: center; gap: 9px; width: 326px; height: 35px; padding: 0 6px 0 8px; background: #fff; border: 1px solid #999; margin-right: 22px; }
.search input { flex: 1; padding-left: 7px; color: #555; }
.search input::placeholder { color: #666; opacity: 1; }
.search-dd { fill: #555; margin-left: 2px; }
.win { display: flex; gap: 33px; padding-right: 11px; color: #fff; }

/* Ribbon */
.ribbon { display: flex; height: 142px; border-bottom: 1px solid #8a8a8a; }
.group { display: grid; height: 138px; margin-top: 1px; border-right: 1px solid #858585; }
.g1 { grid-template-columns: 94px 94px 229px; padding-left: 6px; }
.g2 { grid-template-columns: 86px 70px 85px 174px; }
.g3 { grid-template-columns: 51px 69px 101px 130px 113px; }
.g4 { grid-template-columns: 95px 66px; }
.g5 { grid-template-columns: 93px; }
.g6 { grid-template-columns: 53px 84px; border: 0; }
.big { display: flex; flex-direction: column; align-items: center; gap: 4px; padding: 6px 0 8px; }
.big svg, .stack svg { width: 36px; height: 36px; }
.big svg.more { width: 12px; height: 8px; margin-top: auto; fill: #fff; }
.big:disabled { color: #858585; }
.stack { display: grid; grid-template-rows: repeat(3, 46px); padding-left: 4px; }
.stack button { display: flex; align-items: center; gap: 8px; }
.collapse { margin: auto 15px 17px auto; }

/* Command tabs */
.tabrow { display: flex; justify-content: space-between; height: 39px; background: #c3c9d2; }
.tabs { display: grid; grid-template-columns: 105px 84px 95px 102px 191px 241px 66px 216px 262px; border-bottom: 1px solid #8a8a8a; }
.tabs button { background: #333; border-left: 1px solid #8a8a8a; font-size: 20px; padding-top: 2px; }
.tabs button:last-child { border-right: 1px solid #8a8a8a; }
.tabs button:nth-child(-n+4) { font-size: 19px; }
.tabs button[aria-selected] { background: #4a4a4a; border: 0; font-size: 18px; font-weight: 700; }
.docwin { display: flex; gap: 10px; align-items: center; padding: 12px 11px 0 0; color: #868a93; }

/* Workspace */
.work { display: grid; grid-template-columns: 314px minmax(0, 1fr); min-height: 0; }
.panel { display: flex; flex-direction: column; min-height: 0; border-right: 1px solid #8a8a8a; border-left: 1px solid #9a9a9a; overflow: hidden; }
.grip { display: flex; justify-content: center; align-items: center; height: 31px; margin: 4px 2px 4px 0; padding-right: 2px; border: solid #8a8a8a; border-width: 1px 0; }
.ptabs { position: relative; display: flex; height: 45px; margin-right: 1px; border-top: 1px solid #8a8a8a; }
.ptabs > button { display: flex; align-items: center; justify-content: center; width: 60px; background: #333; border-right: 1px solid #8a8a8a; }
.ptabs > .on { background: none; width: 61px; }
.pnav { position: absolute; right: 0; bottom: 0; display: flex; height: 23px; width: 46px; background: #f2f2f2; }
.pnav button { flex: 1; color: #000; line-height: 23px; border-right: 1px solid #ccc; }
.filter { display: flex; align-items: center; gap: 6px; height: 44px; margin: 1px 4px 1px; padding-left: 5px; background: #565656; border: 1px solid #8a8a8a; }
.filter input { flex: 1; color: #fff; }
.tree { list-style: none; margin: 0; padding: 0 0 1px; flex: 1; min-height: 0; overflow: hidden; font-size: 19px; }
.tree li { display: flex; height: 36px; align-items: center; padding-left: 14px; white-space: nowrap; }
.tree i { flex: none; width: 21px; }
.tree .has i::before { content: ""; display: block; width: 0; border: solid transparent; border-width: 6px 0 6px 6px; border-left-color: #fff; }
.tree span { display: flex; align-items: center; gap: 6px; height: 36px; padding: 0 4px; }
.tree span svg { width: 28px; height: 28px; }
.tree .root { padding-left: 5px; gap: 2px; margin-right: 2px; overflow: hidden; }
.tree .sel { height: 40px; align-items: flex-start; padding-left: 0; border-bottom: 4px solid #3484cc; }
.tree .sel i { width: 35px; }
.tree .sel span { background: #0474d6; }
.hscroll { height: 30px; margin-right: 2px; padding: 12px 30px; background: #f0f0f0; }
.thumb { width: 128px; height: 7px; border-radius: 3px; background: #868686; }
.panel-foot { height: 5px; border-bottom: 1px solid #8a8a8a; }

/* Graphics area */
.viewport { position: relative; display: flex; justify-content: center; align-items: flex-start; background: #c3c9d2; overflow: hidden; }
.model { margin-top: 232px; }
.hud { position: absolute; top: 2px; display: flex; height: 46px; padding-right: 4px; }
.hud button { display: flex; align-items: center; justify-content: center; width: 46px; }
.hud svg { width: 36px; height: 36px; }
.hud .dd { width: 20px; fill: #84888f; }
.hud .dd svg { width: 10px; height: 7px; }
.flyout { position: absolute; left: 0; top: 601px; width: 16px; height: 68px; background: #4a4a4a; border: 1px solid #8a8a8a; border-left: 0; }
.triad { position: absolute; left: 10px; bottom: 74px; font-size: 17px; text-anchor: middle; }
.taskpane { position: absolute; right: 0; top: 52px; width: 40px; border: solid #777; border-width: 1px 0 1px 1px; }
.taskpane button { display: block; width: 100%; height: 36px; background: #333; border-bottom: 1px solid #8a8a8a; }
.taskpane .on { background: #a9a9a9; }
.taskpane svg { width: 34px; height: 34px; margin: 0 auto; }

/* Sheet tabs and status */
.sheetbar { display: flex; height: 30px; border: solid #8a8a8a; border-width: 1px 0; }
.pager { display: flex; width: 98px; padding-left: 2px; background: #fff; }
.pager button { width: 24px; height: 24px; background: #a6a7bd; border: 1px solid #8687a0; }
.pager svg { width: 22px; height: 22px; fill: #77788f; stroke: #77788f; }
.sheet { font-size: 22px; line-height: 28px; padding: 0 12px; background: #333; border-right: 1px solid #8a8a8a; }
.sheet.on { background: #4a4a4a; font-weight: 700; padding: 0 12px 0 19px; }
.sheet:last-child { padding: 0 28px 0 16px; }
.status { display: flex; height: 29px; overflow: hidden; padding: 0 5px 0 1px; font-size: 20px; line-height: 37px; }
.edition { flex: 1; }
.mode { margin-right: 138px; }
.units { margin-right: 39px; line-height: 37px; }
.up { margin: 14px 30px 0 0; }
.status > svg:last-child { margin-top: 3px; }
```
